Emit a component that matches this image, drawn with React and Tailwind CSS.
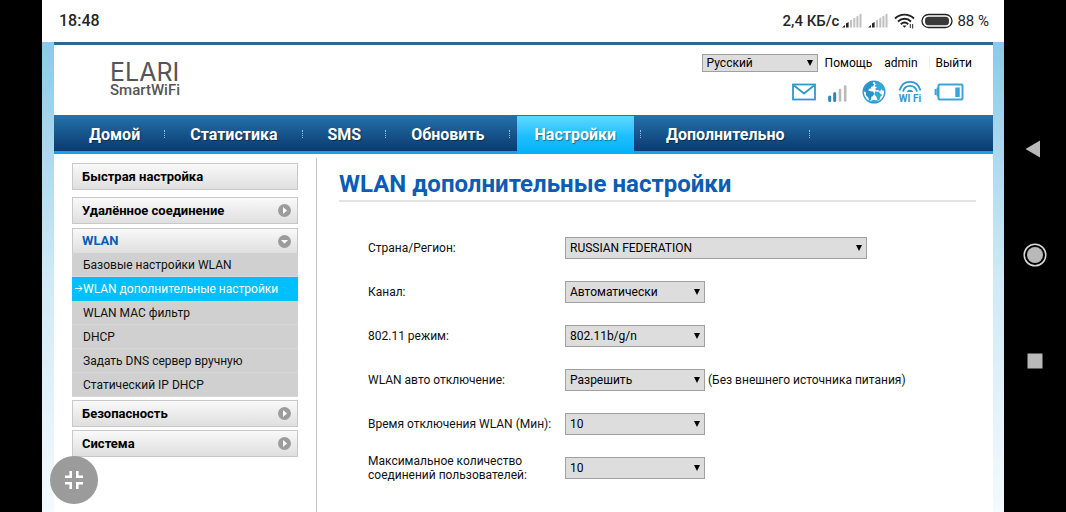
import clsx from "clsx";

const navItems = [
  "Домой",
  "Статистика",
  "SMS",
  "Обновить",
  "Настройки",
  "Дополнительно",
];

const wlanItems = [
  "Базовые настройки WLAN",
  "WLAN дополнительные настройки",
  "WLAN MAC фильтр",
  "DHCP",
  "Задать DNS сервер вручную",
  "Статический IP DHCP",
];

const fields = [
  { id: "country", label: "Страна/Регион:", value: "RUSSIAN FEDERATION", wide: true },
  { id: "channel", label: "Канал:", value: "Автоматически" },
  { id: "mode", label: "802.11 режим:", value: "802.11b/g/n" },
  {
    id: "autoOff",
    label: "WLAN авто отключение:",
    value: "Разрешить",
    note: "(Без внешнего источника питания)",
  },
  { id: "offTime", label: "Время отключения WLAN (Мин):", value: "10" },
  { id: "maxUsers", label: "Максимальное количество соединений пользователей:", value: "10" },
];

const Select = ({ id, value, className, label }) => (
  <div className={clsx("relative shrink-0", className)}>
    <select
      id={id}
      aria-label={label}
      defaultValue={value}
      className="block h-full w-full appearance-none border border-[#a0a0a0] bg-[#dddddd] pl-1 pr-4 text-xs leading-4 text-black"
    >
      <option value={value}>{value}</option>
    </select>
    <svg
      className="pointer-events-none absolute right-1 top-1/2 h-2 w-2 -translate-y-1/2"
      viewBox="0 0 8 8"
    >
      <path d="M1 1h6L4 7z" fill="#000" />
    </svg>
  </div>
);

/* ---------- phone status bar ---------- */

const PhoneSignal = () => (
  <svg className="h-4 w-5" viewBox="0 0 20 16">
    <path d="M0 14.500l3-2.500v2.500zM4 10.500l2.600-1.500v5.500H4z" fill="#222" />
    <path d="M8 7.500l2-1v8H8zM11.300 5.500l2-1v10h-2zM14.400 3.500l2-1v12h-2zM17.500 1.500l2-1v14h-2z" fill="#c0c0c0" />
  </svg>
);

const StatusBar = () => (
  <div className="flex h-[42px] items-center justify-between bg-white pl-[17px] pr-[15px] text-[#262626]">
    <span className="text-base font-medium">18:48</span>
    <div className="flex items-center">
      <span className="mr-[3px] text-[15px] font-medium">2,4 КБ/с</span>
      <PhoneSignal />
      <span className="w-[6px]" />
      <PhoneSignal />
      <svg className="ml-[6px] h-4 w-[22px]" viewBox="0 0 22 16" fill="none" stroke="#222" strokeWidth="1.900">
        <path d="M1 5.500C6.500.3 14.500.3 20 5.500" />
        <path d="M4 8.500c4-3.600 9.200-3.600 13 0" />
        <path d="M6.800 11.300c2.200-2 5.200-2 7.400 0" />
        <path d="M8.500 12.500h4l-2 2.300z" fill="#222" stroke="none" />
        <path d="M16.300 15v-4M18.700 11v4.500" strokeWidth="1" />
      </svg>
      <svg className="ml-[5px] h-4 w-8" viewBox="0 0 32 16">
        <rect x="1" y="1.500" width="30" height="13" rx="6.500" fill="#fff" stroke="#222" strokeWidth="1.300" />
        <rect x="4" y="3.700" width="24" height="8.600" rx="3.500" fill="#3a3a3a" />
      </svg>
      <span className="ml-1 text-[15px]">88 %</span>
    </div>
  </div>
);

/* ---------- router header ---------- */

const Logo = () => (
  <div className="text-[#555]">
    <div className="font-[Inter,sans-serif] text-[25px] leading-[21px]">ELARI</div>
    <div className="text-[15px] leading-[14px] font-medium">SmartWiFi</div>
  </div>
);

const HeaderIcons = () => (
  <div className="mt-2 flex items-center pr-2">
    <svg className="h-6 w-6" viewBox="0 0 24 24" fill="none" stroke="#3198cf" strokeWidth="1.800">
      <rect x="1" y="4.500" width="22" height="15" />
      <path d="M2 5.500l10 8 10-8" />
    </svg>
    <svg className="ml-3 h-6 w-5" viewBox="0 0 20 24">
      <path d="M1.700 20.500v-3.500M6.700 20.500v-7" stroke="#2b86b8" strokeWidth="3" strokeLinecap="round" />
      <path d="M12 20.500v-10.500M17.200 20.500v-14" stroke="#bcb8b8" strokeWidth="2.600" strokeLinecap="round" />
    </svg>
    <svg className="ml-[14px] h-6 w-6" viewBox="0 0 24 24">
      <circle cx="12" cy="12" r="10.800" fill="#fff" stroke="#3198cf" strokeWidth="1.400" />
      <path
        d="M1.500 11C2.500 5 7 1.500 11.500 1.400l-.8 1.800 1.500 1-1.400 2.200-2 .4.500 1.600-2.300.4-.6 1.800 2 .6 2.600.4 1.300 2-1.300 2.500-1.700.8-.3 3-1.600 1.100-1.200-3.600-2.400-2.400.4-2.300z"
        fill="#2b91c9"
      />
      <path
        d="M13 1.500c5 .3 8.800 3.800 9.600 8.500l-1.900.7-1.200-1.500-1.600 2.200-1.800-1.500-2.300.3-.5-1.700 1.700-1.200-2.300-.9 1-2.200-1.200-1.400zM13.200 11.500l3.600.2 2.200 2.500 1.600.2-2.300 2.600-.8 3.200-1.900.3-1.100-3.500-2.200-2.400zM8 21.300l3-1.300 4 .2 1.500 1c-2.800 1.600-6 1.400-8.500.1z"
        fill="#3ba5da"
      />
    </svg>
    <svg className="ml-3 h-6 w-6 overflow-visible" viewBox="0 0 24 24" fill="none" stroke="#3198cf" strokeWidth="1.800">
      <path d="M1.500 10.500C3 5 7 1.800 12 1.800S21 5 22.500 10.500" />
      <path d="M5 11.500C6 8 8.500 5.800 12 5.800s6 2.200 7 5.700" />
      <path d="M9 12c.4-1.300 1.300-2.200 3-2.200s2.600.9 3 2.200z" fill="#3198cf" stroke="none" />
      <text x="12" y="22" textAnchor="middle" fontSize="10" fontWeight="700" fill="#3198cf" stroke="none">
        WI Fi
      </text>
    </svg>
    <svg className="ml-3 h-6 w-[30px]" viewBox="0 0 30 24" fill="none" stroke="#3ba5da">
      <rect x="4.500" y="4.500" width="24" height="15" rx="1" strokeWidth="2" />
      <path d="M1.500 9v6M3.500 7.500v9" strokeWidth="1.800" />
      <path d="M23.500 7.500v9.500" strokeWidth="4.500" />
    </svg>
  </div>
);

const Header = () => (
  <header className="flex h-[70px] items-start justify-between bg-white pl-14 pr-[21px] pt-[9px]">
    <div className="pt-2">
      <Logo />
    </div>
    <div className="flex flex-col items-end">
      <div className="flex items-center text-xs leading-[18px] text-black">
        <Select id="lang" label="Язык" value="Русский" className="h-[18px] w-[116px]" />
        <a href="#help" className="ml-[7px]">Помощь</a>
        <a href="#admin" className="ml-3">admin</a>
        <span className="ml-[11px] h-3 w-px bg-[#eeeeee]" />
        <a href="#logout" className="ml-[6px]">Выйти</a>
      </div>
      <HeaderIcons />
    </div>
  </header>
);

const NavBar = () => (
  <nav className="flex h-[39px] items-stretch gap-px border-b-3 border-[#1b9fe0] bg-linear-to-b from-[#2573ab] to-[#0b3a70] pl-[11px]">
    {navItems.map((item) => (
      <div key={item} className="flex items-center">
        <a
          href="#nav"
          className={clsx(
            "mx-[6px] flex items-center px-[18px] text-base font-bold text-white text-shadow-[1px_1px_1px_#00000066]",
            item === "Настройки"
              ? "mt-px -mb-[3px] h-[38px] self-start bg-linear-to-b from-[#5bd8ff] via-[#1fbfff] to-[#00b2f5]"
              : "h-full pt-[3px]"
          )}
        >
          {item}
        </a>
        <span className="mt-[2px] h-2 border-l border-dotted border-[#8fc0e4]" />
      </div>
    ))}
  </nav>
);

/* ---------- side menu ---------- */

const MenuArrow = ({ open }) => (
  <svg className="h-[13px] w-[13px]" viewBox="0 0 13 13">
    <circle cx="6.500" cy="6.500" r="6.500" fill="#9c9c9c" />
    <path d={open ? "M3 5h7L6.500 8.800z" : "M5 3v7l4-3.500z"} fill="#fff" />
  </svg>
);

const MenuHead = ({ children, arrow = true, open, className }) => (
  <button
    type="button"
    className={clsx(
      "flex w-full items-center justify-between border border-[#c9c9c9] bg-linear-to-b from-[#f9f9f9] to-[#dfdfdf] pl-[9px] pr-[6px] text-left text-[13px] font-bold",
      open ? "h-[25px] border-b-0 text-[#0a5cb8]" : "h-[27px] text-black",
      className
    )}
  >
    {children}
    {arrow && <MenuArrow open={open} />}
  </button>
);

const SideMenu = () => (
  <aside className="w-[226px] shrink-0 pt-[9px]">
    <MenuHead arrow={false}>Быстрая настройка</MenuHead>
    <MenuHead className="mt-[7px]">Удалённое соединение</MenuHead>
    <MenuHead className="mt-1" open>WLAN</MenuHead>
    <ul className="bg-[#d0d0d0] text-xs text-[#111]">
      {wlanItems.map((item, index) => (
        <li key={item}>
          <a
            href="#wlan"
            className={clsx(
              "relative flex h-6 items-center border-b pl-[11px]",
              index === 1
                ? "border-[#00bfff] bg-[#00bfff] text-white"
                : "border-[#d8d8d8]"
            )}
          >
            {index === 1 && (
              <svg className="absolute left-[3px] h-[9px] w-2" viewBox="0 0 8 9" fill="none" stroke="#fff">
                <path d="M0 4.500h7M4 1.500l3 3-3 3" />
              </svg>
            )}
            {item}
          </a>
        </li>
      ))}
    </ul>
    <MenuHead className="mt-[3px]">Безопасность</MenuHead>
    <MenuHead className="mt-[3px]">Система</MenuHead>
  </aside>
);

/* ---------- settings form ---------- */

const SettingsForm = () => (
  <main className="mt-1 min-w-0 flex-1 border-l border-[#c4c4c4] pl-[22px] pr-[17px]">
    <h1 className="border-b-2 border-[#e4e4e4] pb-px pt-3 text-2xl leading-[29px] font-bold text-[#0b5cb5]">
      WLAN дополнительные настройки
    </h1>
    <form className="mt-[35px] flex flex-col gap-[22px] pl-[29px] text-xs text-[#111]">
      {fields.map((field) => (
        <div key={field.id} className="flex h-[22px] items-center">
          <label htmlFor={field.id} className="w-[197px] shrink-0 leading-[14px]">
            {field.label}
          </label>
          <Select
            id={field.id}
            value={field.value}
            className={clsx("h-[22px]", field.wide ? "w-[302px]" : "w-[140px]")}
          />
          {field.note && <span className="ml-[3px]">{field.note}</span>}
        </div>
      ))}
    </form>
  </main>
);

const SystemNav = () => (
  <div className="flex w-[62px] shrink-0 flex-col items-center justify-center gap-[82px] bg-black pb-[3px]">
    <button type="button" aria-label="Назад">
      <svg className="h-6 w-6" viewBox="0 0 24 24">
        <path d="M2.500 12L17 3.500v17z" fill="#b9b9b9" />
      </svg>
    </button>
    <button type="button" aria-label="Домой">
      <svg className="h-6 w-6" viewBox="0 0 24 24">
        <circle cx="12" cy="12" r="10.800" fill="none" stroke="#d8d8d8" strokeWidth="1.500" />
        <circle cx="12" cy="12" r="8" fill="#b9b9b9" />
      </svg>
    </button>
    <button type="button" aria-label="Недавние">
      <svg className="h-6 w-6" viewBox="0 0 24 24">
        <path d="M4.500 4.500h15v15h-15z" fill="#b9b9b9" />
      </svg>
    </button>
  </div>
);

const App = () => {
  return (
    <div className="relative flex min-h-screen bg-black pl-[42px] font-[Roboto,sans-serif]">
      <div className="flex min-w-0 flex-1 flex-col">
        <StatusBar />
        <div className="flex flex-1 flex-col bg-linear-to-b from-[#8acae8] via-[#cfe9f6] to-[#f4fafd] pl-3 pr-[11px]">
          <div className="flex flex-1 flex-col border-t-3 border-[#2d6a90] bg-white">
            <Header />
            <NavBar />
            <div className="flex flex-1 gap-[18px] pl-[18px]">
              <SideMenu />
              <SettingsForm />
            </div>
          </div>
        </div>
      </div>
      <SystemNav />
      <button
        type="button"
        aria-label="Свернуть"
        className="absolute bottom-2 left-[50px] flex h-12 w-12 items-center justify-center rounded-full bg-[#9b9b9b]"
      >
        <svg className="h-5 w-5" viewBox="0 0 20 20" fill="none" stroke="#fff" strokeWidth="2.600">
          <path d="M1 6.700h5.700V1M13.300 1v5.700H19M1 13.300h5.700V19M13.300 19v-5.700H19" />
        </svg>
      </button>
    </div>
  );
};

export default App;
